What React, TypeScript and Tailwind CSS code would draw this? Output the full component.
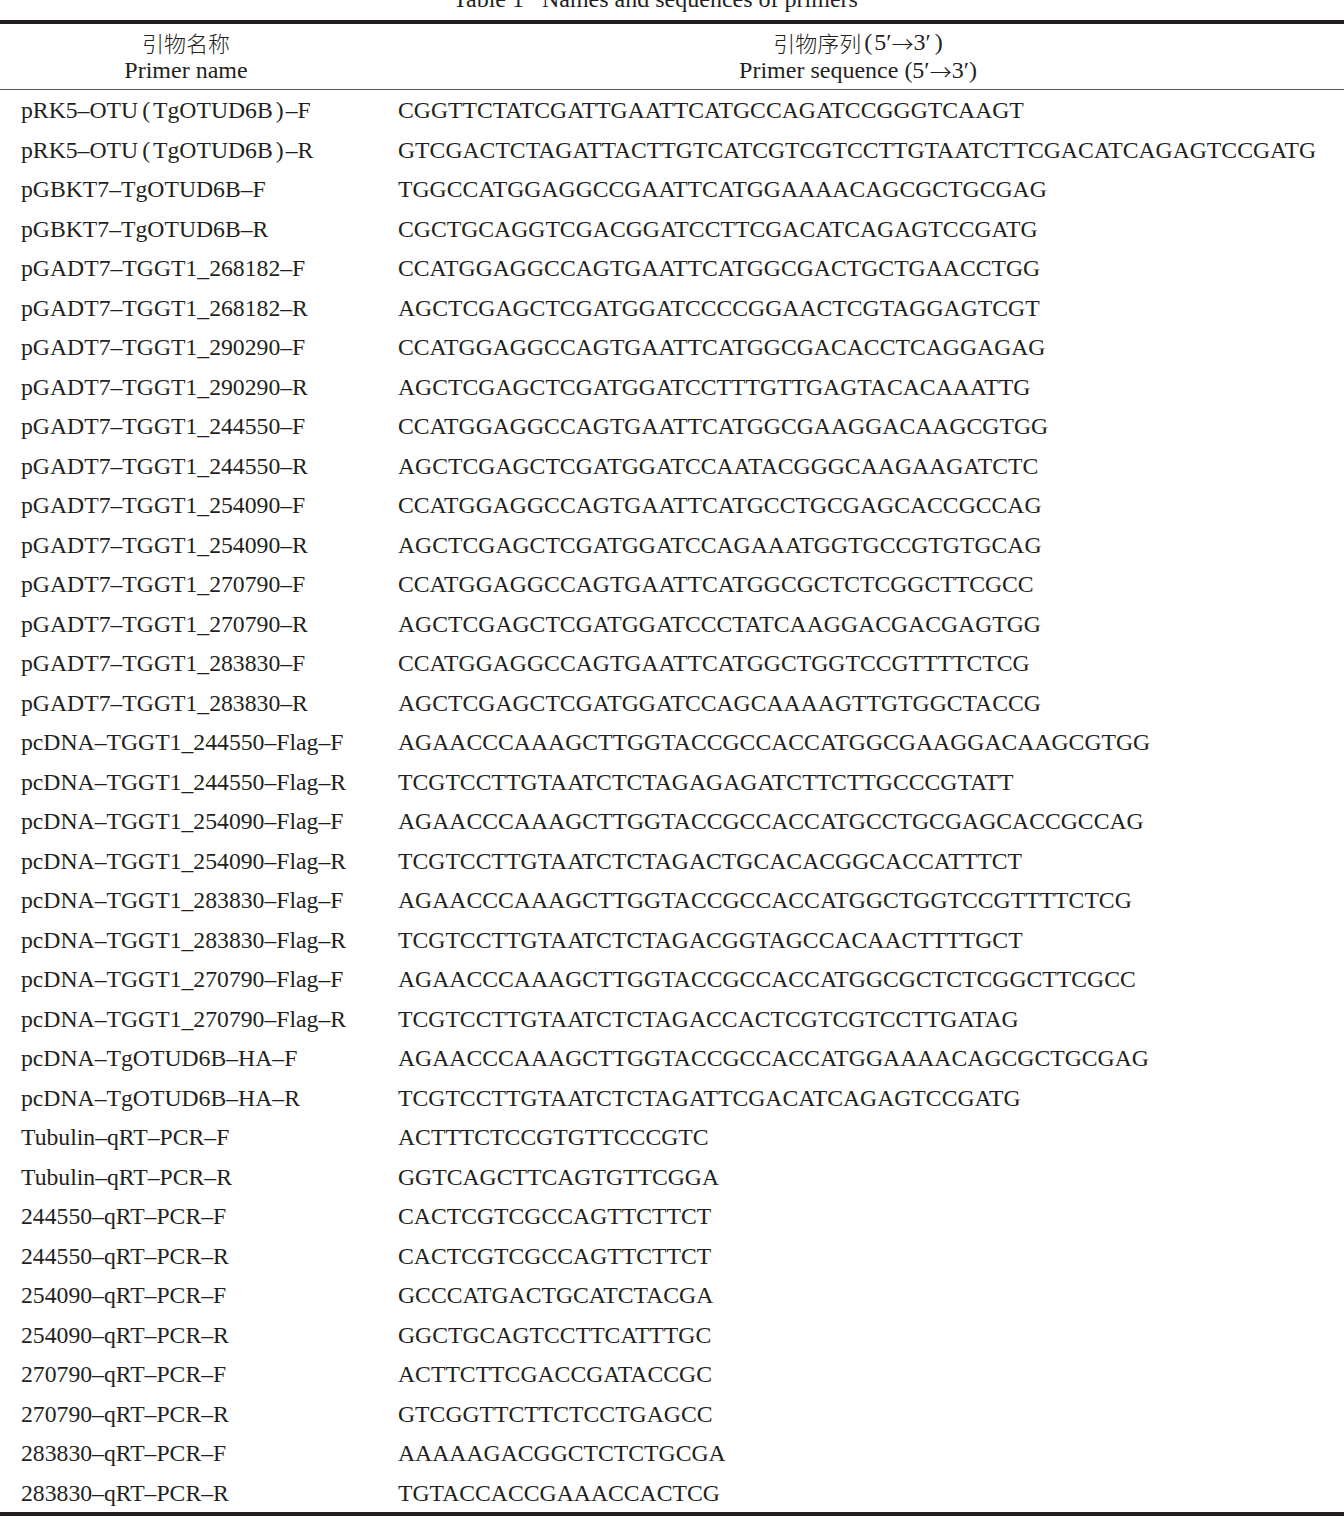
const primers: [string, string][] = [
  ["pRK5–OTU(TgOTUD6B)–F", "CGGTTCTATCGATTGAATTCATGCCAGATCCGGGTCAAGT"],
  ["pRK5–OTU(TgOTUD6B)–R", "GTCGACTCTAGATTACTTGTCATCGTCGTCCTTGTAATCTTCGACATCAGAGTCCGATG"],
  ["pGBKT7–TgOTUD6B–F", "TGGCCATGGAGGCCGAATTCATGGAAAACAGCGCTGCGAG"],
  ["pGBKT7–TgOTUD6B–R", "CGCTGCAGGTCGACGGATCCTTCGACATCAGAGTCCGATG"],
  ["pGADT7–TGGT1_268182–F", "CCATGGAGGCCAGTGAATTCATGGCGACTGCTGAACCTGG"],
  ["pGADT7–TGGT1_268182–R", "AGCTCGAGCTCGATGGATCCCCGGAACTCGTAGGAGTCGT"],
  ["pGADT7–TGGT1_290290–F", "CCATGGAGGCCAGTGAATTCATGGCGACACCTCAGGAGAG"],
  ["pGADT7–TGGT1_290290–R", "AGCTCGAGCTCGATGGATCCTTTGTTGAGTACACAAATTG"],
  ["pGADT7–TGGT1_244550–F", "CCATGGAGGCCAGTGAATTCATGGCGAAGGACAAGCGTGG"],
  ["pGADT7–TGGT1_244550–R", "AGCTCGAGCTCGATGGATCCAATACGGGCAAGAAGATCTC"],
  ["pGADT7–TGGT1_254090–F", "CCATGGAGGCCAGTGAATTCATGCCTGCGAGCACCGCCAG"],
  ["pGADT7–TGGT1_254090–R", "AGCTCGAGCTCGATGGATCCAGAAATGGTGCCGTGTGCAG"],
  ["pGADT7–TGGT1_270790–F", "CCATGGAGGCCAGTGAATTCATGGCGCTCTCGGCTTCGCC"],
  ["pGADT7–TGGT1_270790–R", "AGCTCGAGCTCGATGGATCCCTATCAAGGACGACGAGTGG"],
  ["pGADT7–TGGT1_283830–F", "CCATGGAGGCCAGTGAATTCATGGCTGGTCCGTTTTCTCG"],
  ["pGADT7–TGGT1_283830–R", "AGCTCGAGCTCGATGGATCCAGCAAAAGTTGTGGCTACCG"],
  ["pcDNA–TGGT1_244550–Flag–F", "AGAACCCAAAGCTTGGTACCGCCACCATGGCGAAGGACAAGCGTGG"],
  ["pcDNA–TGGT1_244550–Flag–R", "TCGTCCTTGTAATCTCTAGAGAGATCTTCTTGCCCGTATT"],
  ["pcDNA–TGGT1_254090–Flag–F", "AGAACCCAAAGCTTGGTACCGCCACCATGCCTGCGAGCACCGCCAG"],
  ["pcDNA–TGGT1_254090–Flag–R", "TCGTCCTTGTAATCTCTAGACTGCACACGGCACCATTTCT"],
  ["pcDNA–TGGT1_283830–Flag–F", "AGAACCCAAAGCTTGGTACCGCCACCATGGCTGGTCCGTTTTCTCG"],
  ["pcDNA–TGGT1_283830–Flag–R", "TCGTCCTTGTAATCTCTAGACGGTAGCCACAACTTTTGCT"],
  ["pcDNA–TGGT1_270790–Flag–F", "AGAACCCAAAGCTTGGTACCGCCACCATGGCGCTCTCGGCTTCGCC"],
  ["pcDNA–TGGT1_270790–Flag–R", "TCGTCCTTGTAATCTCTAGACCACTCGTCGTCCTTGATAG"],
  ["pcDNA–TgOTUD6B–HA–F", "AGAACCCAAAGCTTGGTACCGCCACCATGGAAAACAGCGCTGCGAG"],
  ["pcDNA–TgOTUD6B–HA–R", "TCGTCCTTGTAATCTCTAGATTCGACATCAGAGTCCGATG"],
  ["Tubulin–qRT–PCR–F", "ACTTTCTCCGTGTTCCCGTC"],
  ["Tubulin–qRT–PCR–R", "GGTCAGCTTCAGTGTTCGGA"],
  ["244550–qRT–PCR–F", "CACTCGTCGCCAGTTCTTCT"],
  ["244550–qRT–PCR–R", "CACTCGTCGCCAGTTCTTCT"],
  ["254090–qRT–PCR–F", "GCCCATGACTGCATCTACGA"],
  ["254090–qRT–PCR–R", "GGCTGCAGTCCTTCATTTGC"],
  ["270790–qRT–PCR–F", "ACTTCTTCGACCGATACCGC"],
  ["270790–qRT–PCR–R", "GTCGGTTCTTCTCCTGAGCC"],
  ["283830–qRT–PCR–F", "AAAAAGACGGCTCTCTGCGA"],
  ["283830–qRT–PCR–R", "TGTACCACCGAAACCACTCG"],
];

// the printed table sets its brackets wide, like full-width ones
function PrimerName({ name }: { name: string }) {
  const m = name.match(/^(.*)\((.*)\)(.*)$/);
  if (!m) return <>{name}</>;
  return (
    <>
      {m[1]}
      <span className="pl-[4px] pr-[3px]">(</span>
      {m[2]}
      <span className="pl-[3px] pr-[2px]">)</span>
      {m[3]}
    </>
  );
}

export default function App() {
  return (
    <div className="h-[1521px] w-[1344px] overflow-hidden bg-white text-[#231f20] [font-family:'Liberation_Serif','Noto_Sans_CJK_SC',serif]">
      {/* caption, cut off by the top edge */}
      <div className="h-[20px] overflow-hidden">
        <div className="-mt-[13px] pl-[453px] text-[24px] leading-[24px] whitespace-pre">
          Table 1{"   "}Names and sequences of primers
        </div>
      </div>
      <div className="border-t-[4px] border-[#231f20]" />

      <div className="flex h-[66px] border-b border-[#555] text-[24px] leading-[28px]">
        <div className="flex w-[372px] flex-col items-center justify-center pb-[2px]">
          <div className="[font-family:'Noto_Sans_CJK_SC',sans-serif] text-[22px] font-light">引物名称</div>
          <div>Primer name</div>
        </div>
        <div className="flex flex-1 flex-col items-center justify-center pb-[2px]">
          <div className="flex items-center">
            <span className="[font-family:'Noto_Sans_CJK_SC',sans-serif] text-[22px] font-light">引物序列</span>
            <span className="pl-[3px] pr-[2px]">(</span>
            <span>5′</span>
            <span className="[font-family:'Noto_Sans_CJK_SC',sans-serif] text-[22px] font-light">→</span>
            <span>3′</span>
            <span className="pl-[4px]">)</span>
          </div>
          <div className="flex items-center">
            <span className="whitespace-pre">Primer sequence (5′</span>
            <span className="[font-family:'Noto_Sans_CJK_SC',sans-serif] text-[22px] font-light">→</span>
            <span>3′)</span>
          </div>
        </div>
      </div>

      <div className="border-b-[4px] border-[#231f20]">
        {primers.map(([name, seq]) => (
          <div key={name + seq} className="flex h-[39.5px] items-center pt-[3px] text-[23.7px] leading-none">
            <div className="w-[372px] pl-[21px] whitespace-nowrap">
              <PrimerName name={name} />
            </div>
            <div className="pl-[26px] whitespace-nowrap">{seq}</div>
          </div>
        ))}
      </div>
    </div>
  );
}
